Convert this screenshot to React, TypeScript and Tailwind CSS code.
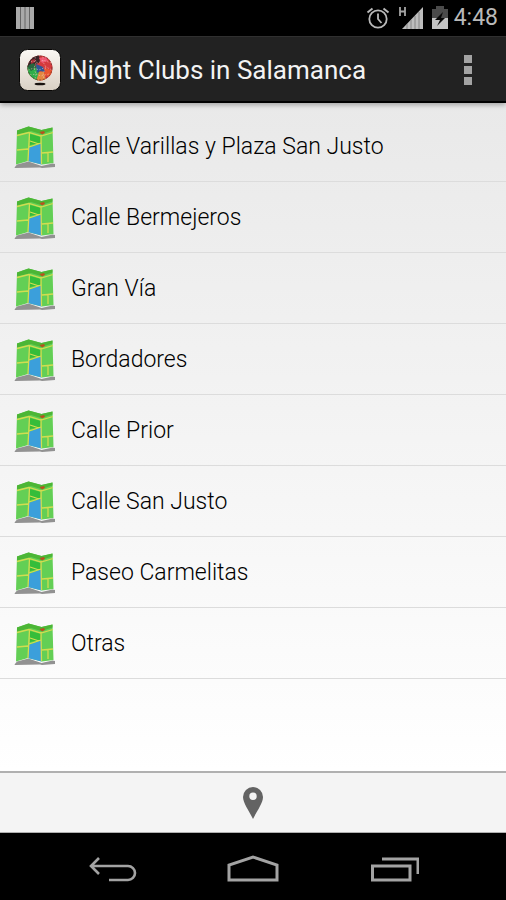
const PLACES = [
    'Calle Varillas y Plaza San Justo',
    'Calle Bermejeros',
    'Gran Vía',
    'Bordadores',
    'Calle Prior',
    'Calle San Justo',
    'Paseo Carmelitas',
    'Otras',
];

function MapIcon() {
    return (
        <svg viewBox="0 0 42 44" className="h-11 w-[42px] shrink-0" aria-hidden="true">
            <path d="M0.500 42.500 3 39.500 14.500 36.500 27.500 41 38.500 38.500 41 39V42L28 43 26 42.500 1 43Z" fill="#929292" />
            <path d="M3 5.500 14.500 1.500 27.500 5 38.500 2.500 39.500 38 28 39.500 14 36 2 39.500Z" fill="#63cf55" />
            <path d="M3 5.500 14.500 1.500 27.500 5 38.500 2.500V5.500L27 9 17 6 3 9.500Z" fill="#4cb636" />
            <path d="M16 9 27 12 26 18 16 20Z" fill="#35bd3a" />
            <path d="M14.500 23 27 18.500 27.500 39.500 14 36Z" fill="#3b9fdb" />
            <path
                d="M3 10.500 15 7.500 27 11 39 7.500M15.500 8 14 36M27 10 27.500 39M3 25 14 24M15 22 27 18M16 16 25 19M28 28 39 27M34 28V37"
                fill="none"
                stroke="#d2dc50"
                strokeWidth="1.300"
            />
            <path d="M25.500 7 30 6 31 8 28 9.500Z" fill="#b8521f" />
        </svg>
    );
}

/* Light rounded tile with a multicoloured disco ball. */
function AppIcon() {
    return (
        <svg viewBox="0 0 42 42" className="h-[42px] w-[42px] shrink-0" aria-hidden="true">
            <defs>
                <linearGradient id="tile" x1="0" y1="0" x2="0" y2="1">
                    <stop offset="0" stopColor="#fbf8f3" />
                    <stop offset="1" stopColor="#d9d0c4" />
                </linearGradient>
                <clipPath id="ball">
                    <circle cx="21" cy="19" r="12.500" />
                </clipPath>
            </defs>
            <rect x="0.500" y="0.500" width="41" height="41" rx="8" fill="url(#tile)" stroke="#080706" />
            <g clipPath="url(#ball)">
                <path d="M8 6h26v26H8Z" fill="#d53a3d" />
                <path d="M8 6h12l1 7-7 4-6 3Z" fill="#3a2427" />
                <path d="M8 18 15 15 20 22 19 32H8Z" fill="#2fae4a" />
                <path d="M8 17 14 14 18 18 12 22Z" fill="#27663d" />
                <path d="M20 23 25 22 27 32H17Z" fill="#e2873f" />
                <path d="M26 19 34 22 31 29 25 25Z" fill="#e8552f" />
                <path d="M17 15 24 18 26 23 21 22 18 24Z" fill="#2e5796" />
                <path d="M20 9 27 8 29 12 23 14Z" fill="#ef5570" />
                <path d="M12 11 16 10 16 13 12 15Z" fill="#a82d35" />
                <path
                    d="M9 14 14 12 19 14 24 11 32 14M9 21 15 19 20 21 27 18 33 21M11 26 17 25 22 27 30 25M16 8 17 14 15 19 17 25 16 30M24 8 24 13 27 18 24 25 25 30"
                    fill="none"
                    stroke="#f6cdbd"
                    strokeDasharray="1.500 1.500"
                    strokeOpacity="0.600"
                    strokeWidth="0.900"
                />
            </g>
            <circle cx="21" cy="19" r="12" fill="none" stroke="#33201d" strokeDasharray="2 1.500" strokeOpacity="0.500" />
            <ellipse cx="21" cy="35" rx="5.500" ry="1.300" fill="#18120f" />
        </svg>
    );
}

function StatusBar() {
    return (
        <div className="flex h-9 items-center justify-between bg-black pr-2 pl-4 text-[#b9b9b9]">
            <svg viewBox="0 0 18 22" className="h-[22px] w-[18px]" aria-hidden="true">
                <path d="M0 0h18v22H0Z" fill="#a9a9a9" />
                <path d="M4.500 0v22M9 0v22M13.500 0v22" stroke="#656565" strokeWidth="1" />
            </svg>
            <div className="flex items-center">
                <svg viewBox="0 0 24 24" className="h-6 w-6" fill="none" stroke="currentColor" aria-hidden="true">
                    <circle cx="12" cy="13" r="8.700" strokeWidth="1.800" />
                    <path d="M12 7.500V13L15.500 17" strokeWidth="1.800" />
                    <path d="M1.500 6.500 6.500 2.500M22.500 6.500 17.500 2.500" strokeWidth="2" />
                </svg>
                <svg viewBox="0 0 26 24" className="ml-2 h-6 w-[26px]" aria-hidden="true">
                    <path d="M2 1V10M7 1V10M2 5.500H7" fill="none" stroke="#a5a5a5" strokeWidth="1.800" />
                    <path d="M25 1V23H4Z" fill="#bdbdbd" />
                    <path d="M9 18v5M13 14v9M17 10v13M21 6v17" stroke="#777777" strokeWidth="0.800" />
                </svg>
                <svg viewBox="0 0 16 24" className="ml-2 h-6 w-4" aria-hidden="true">
                    <path d="M0 3H4V0H12V3H16V12H0Z" fill="#4b4b4b" />
                    <path d="M0 12H16V23H0Z" fill="#c4c4c4" />
                    <path d="M11 6 3 14H8L5 20 13 12H9Z" fill="#080808" />
                </svg>
                <span className="ml-1.5 text-[23px]">4:48</span>
            </div>
        </div>
    );
}

function ActionBar() {
    return (
        <header className="relative flex h-[67px] items-center border-t border-b-2 border-t-[#303030] border-b-black bg-[#222222] pt-0.5 pr-6 pl-[19px] shadow-[0_2px_5px_rgba(0,0,0,0.3)]">
            <AppIcon />
            <h1 className="ml-2 text-[26px] text-[#f3f3f3]">Night Clubs in Salamanca</h1>
            <button type="button" aria-label="More options" className="ml-auto flex w-7 cursor-pointer flex-col items-center gap-[3px]">
                <span className="size-2 bg-[#a3a3a3]" />
                <span className="size-2 bg-[#a3a3a3]" />
                <span className="size-2 bg-[#a3a3a3]" />
            </button>
        </header>
    );
}

function NavigationBar() {
    return (
        <nav className="flex h-[67px] items-center bg-black px-[42px] pt-1 text-[#a3a3a3]">
            <button type="button" aria-label="Back" className="flex flex-1 cursor-pointer justify-center">
                <svg viewBox="0 0 50 30" className="h-[30px] w-[50px]" fill="none" stroke="currentColor" strokeWidth="2.600">
                    <path d="M4 12H41a7 7 0 0 1 0 14H22M12 4 4 12 12 20" />
                </svg>
            </button>
            <button type="button" aria-label="Home" className="flex flex-1 cursor-pointer justify-center">
                <svg viewBox="0 0 54 30" className="h-[30px] w-[54px]" fill="none" stroke="currentColor" strokeWidth="3">
                    <path d="M3 26V11L27 3 51 11V26Z" />
                </svg>
            </button>
            <button type="button" aria-label="Recent apps" className="flex flex-1 cursor-pointer justify-center">
                <svg viewBox="0 0 50 30" className="h-[30px] w-[50px]" fill="none" stroke="currentColor" strokeWidth="3">
                    <path d="M3.500 12H41V26H3.500Z" />
                    <path d="M13 5H49V20" />
                </svg>
            </button>
        </nav>
    );
}

export default function App() {
    return (
        <div className="flex min-h-screen flex-col bg-white font-['Roboto',sans-serif]">
            <StatusBar />
            <ActionBar />
            <main className="flex-1 bg-linear-to-b from-[#e9e9e9] to-white pt-2">
                <ul>
                    {PLACES.map((place) => (
                        <li key={place} className="border-b border-[#dcdcdc]">
                            <button type="button" className="flex h-[70px] w-full cursor-pointer items-center gap-[15px] px-3.5 pt-0.5 text-left text-[23px] font-light text-black">
                                <MapIcon />
                                <span>{place}</span>
                            </button>
                        </li>
                    ))}
                </ul>
            </main>
            <footer className="flex h-[62px] items-center justify-center border-t-2 border-b border-t-[#b0b0b0] border-b-[#b0b0b0] bg-[#f4f4f4]">
                <button type="button" aria-label="Show on map" className="cursor-pointer">
                    <svg viewBox="0 0 20 32" className="h-8 w-5">
                        <path
                            d="M10 0a10 10 0 0 0-10 10c0 6 6 14 10 22 4-8 10-16 10-22A10 10 0 0 0 10 0Zm0 5.500a3.700 3.700 0 1 1 0 7.400 3.700 3.700 0 0 1 0-7.400Z"
                            fill="#636363"
                        />
                    </svg>
                </button>
            </footer>
            <NavigationBar />
        </div>
    );
}
